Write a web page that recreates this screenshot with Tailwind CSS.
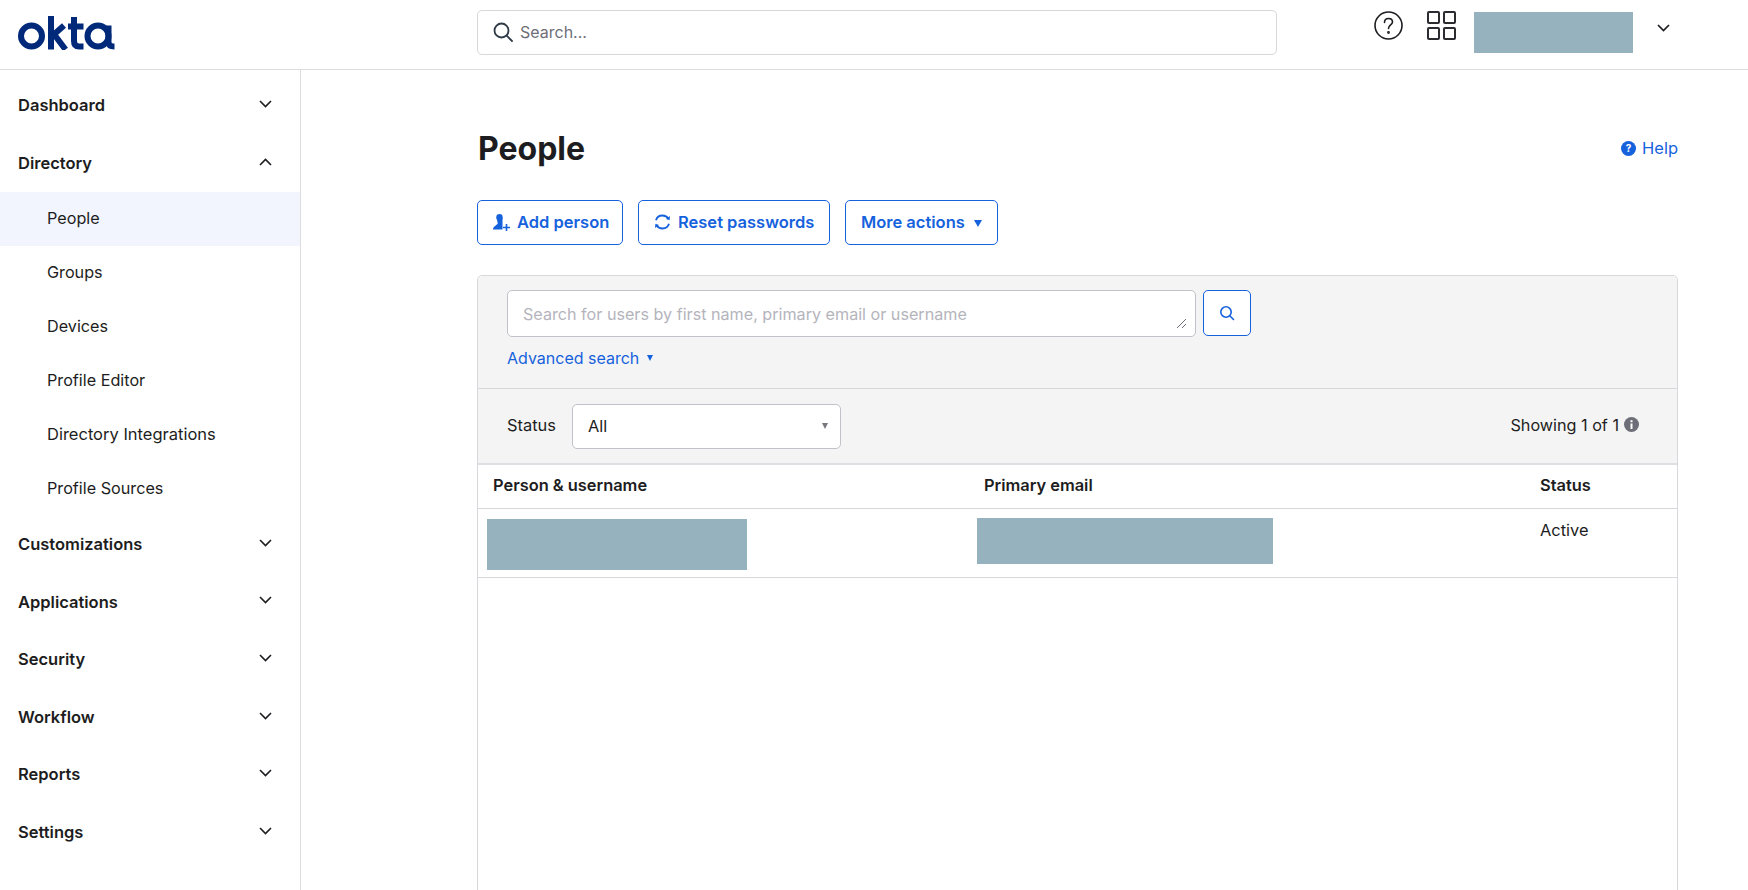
<!DOCTYPE html>
<html lang="en">
<head>
  <meta charset="UTF-8" />
  <title>People - Okta</title>
  <script src="https://cdn.jsdelivr.net/npm/@tailwindcss/browser@4"></script>
</head>
<body class="bg-white text-[#1d1d21] font-['Inter',sans-serif] h-[890px] overflow-hidden">

  <!-- Top bar -->
  <header class="h-[70px] border-b border-[#dcdcdc] flex items-start">
    <div class="w-[477px] pl-[18px] pt-[16px] shrink-0">
      <svg width="97" height="34" viewBox="0 0 97 34" fill="none" stroke="#00297a" stroke-width="6">
        <circle cx="13.5" cy="20" r="10.5" />
        <path d="M33 0V33.5M33 21L46 9.5M37 19.5L47.5 33.5" />
        <path d="M56 1V25Q56 30.5 61 30.5H65.5M50 10.5H65.5" />
        <circle cx="80" cy="20" r="10.5" />
        <path d="M90.5 9.5V26Q90.5 30.5 96.5 30.5" />
      </svg>
    </div>
    <div class="w-[800px] h-[45px] mt-[10px] pb-[2px] border border-[#d7d7dc] rounded-[5px] flex items-center pl-[14px] shrink-0">
      <svg width="22" height="22" viewBox="0 0 22 22" fill="none" stroke="#2e3a46" stroke-width="1.8" stroke-linecap="round">
        <circle cx="9.5" cy="9.5" r="7" />
        <path d="M14.7 14.7L20 20" />
      </svg>
      <span class="ml-[6px] text-[16px] text-[#6e6e78]">Search...</span>
    </div>
    <svg class="ml-[97px] mt-[11px] shrink-0" width="29" height="29" viewBox="0 0 29 29" fill="none" stroke="#1d1d21" stroke-width="1.6" stroke-linecap="round">
      <circle cx="14.5" cy="14.5" r="13.5" />
      <path d="M10.5 11.5C10.5 9 12.3 7.5 14.5 7.5C16.8 7.5 18.5 9 18.5 11C18.5 14 14.5 14 14.5 17.5" />
      <circle cx="14.5" cy="21.5" r="0.6" />
    </svg>
    <div class="ml-[24px] mt-[11px] grid grid-cols-2 gap-[3px] shrink-0">
      <div class="w-[13px] h-[13px] border-2 border-[#2b2b30] rounded-[2px]"></div>
      <div class="w-[13px] h-[13px] border-2 border-[#2b2b30] rounded-[2px]"></div>
      <div class="w-[13px] h-[13px] border-2 border-[#2b2b30] rounded-[2px]"></div>
      <div class="w-[13px] h-[13px] border-2 border-[#2b2b30] rounded-[2px]"></div>
    </div>
    <div class="ml-[18px] mt-[12px] w-[159px] h-[41px] bg-[#97b2bf] shrink-0"></div>
    <svg class="ml-[24px] mt-[24px] shrink-0" width="13" height="8" viewBox="0 0 13 8" fill="none" stroke="#1d1d21" stroke-width="1.7">
      <path d="M1 1L6.5 6.5L12 1" />
    </svg>
  </header>

  <div class="flex h-[820px]">
    <!-- Sidebar -->
    <nav class="w-[301px] shrink-0 border-r border-[#dcdce1] pt-[6px] text-[16.5px]">
      <div class="h-[58px] pl-[18px] pr-[28px] flex items-center justify-between font-semibold">
        <span>Dashboard</span>
        <svg class="mb-[2px]" width="13" height="8" viewBox="0 0 13 8" fill="none" stroke="#1d1d21" stroke-width="1.6"><path d="M1 1L6.5 6.5L12 1" /></svg>
      </div>
      <div class="h-[58px] pl-[18px] pr-[28px] flex items-center justify-between font-semibold">
        <span>Directory</span>
        <svg class="mb-[2px]" width="13" height="8" viewBox="0 0 13 8" fill="none" stroke="#1d1d21" stroke-width="1.6"><path d="M1 7L6.5 1.5L12 7" /></svg>
      </div>
      <div class="h-[54px] pl-[47px] pb-[1px] flex items-center bg-[#f2f5fe] text-[16.2px]">People</div>
      <div class="h-[54px] pl-[47px] pb-[1px] flex items-center text-[16.2px]">Groups</div>
      <div class="h-[54px] pl-[47px] pb-[1px] flex items-center text-[16.2px]">Devices</div>
      <div class="h-[54px] pl-[47px] pb-[1px] flex items-center text-[16.2px]">Profile Editor</div>
      <div class="h-[54px] pl-[47px] pb-[1px] flex items-center text-[16.5px]">Directory Integrations</div>
      <div class="h-[54px] pl-[47px] pb-[1px] flex items-center text-[16.2px]">Profile Sources</div>
      <div class="h-[57.6px] pl-[18px] pr-[28px] pb-[1px] flex items-center justify-between font-semibold">
        <span>Customizations</span>
        <svg class="mb-[3px]" width="13" height="8" viewBox="0 0 13 8" fill="none" stroke="#1d1d21" stroke-width="1.6"><path d="M1 1L6.5 6.5L12 1" /></svg>
      </div>
      <div class="h-[57.6px] pl-[18px] pr-[28px] pb-[1px] flex items-center justify-between font-semibold">
        <span>Applications</span>
        <svg class="mb-[3px]" width="13" height="8" viewBox="0 0 13 8" fill="none" stroke="#1d1d21" stroke-width="1.6"><path d="M1 1L6.5 6.5L12 1" /></svg>
      </div>
      <div class="h-[57.6px] pl-[18px] pr-[28px] pb-[1px] flex items-center justify-between font-semibold">
        <span>Security</span>
        <svg class="mb-[3px]" width="13" height="8" viewBox="0 0 13 8" fill="none" stroke="#1d1d21" stroke-width="1.6"><path d="M1 1L6.5 6.5L12 1" /></svg>
      </div>
      <div class="h-[57.6px] pl-[18px] pr-[28px] pb-[1px] flex items-center justify-between font-semibold">
        <span>Workflow</span>
        <svg class="mb-[3px]" width="13" height="8" viewBox="0 0 13 8" fill="none" stroke="#1d1d21" stroke-width="1.6"><path d="M1 1L6.5 6.5L12 1" /></svg>
      </div>
      <div class="h-[57.6px] pl-[18px] pr-[28px] pb-[1px] flex items-center justify-between font-semibold">
        <span>Reports</span>
        <svg class="mb-[3px]" width="13" height="8" viewBox="0 0 13 8" fill="none" stroke="#1d1d21" stroke-width="1.6"><path d="M1 1L6.5 6.5L12 1" /></svg>
      </div>
      <div class="h-[57.6px] pl-[18px] pr-[28px] pb-[1px] flex items-center justify-between font-semibold">
        <span>Settings</span>
        <svg class="mb-[3px]" width="13" height="8" viewBox="0 0 13 8" fill="none" stroke="#1d1d21" stroke-width="1.6"><path d="M1 1L6.5 6.5L12 1" /></svg>
      </div>
    </nav>

    <!-- Main content -->
    <main class="flex-1 pl-[176px] pr-[70px]">
      <div class="h-[130px] flex items-start justify-between pt-[54px]">
        <h1 class="text-[32px] leading-[48px] font-bold ml-[1px] mt-[1px]">People</h1>
        <a class="flex items-center text-[16.5px] text-[#1662dd] h-[48px]">
          <svg class="mr-[6px]" width="15" height="15" viewBox="0 0 15 15"><circle cx="7.5" cy="7.5" r="7.5" fill="#1662dd" /><text x="7.5" y="11" text-anchor="middle" font-size="10" font-weight="700" fill="#fff">?</text></svg>
          Help
        </a>
      </div>

      <div class="flex gap-[15px] text-[16.5px] font-semibold text-[#1662dd]">
        <button class="w-[146px] h-[45px] pb-[1px] border border-[#1662dd] rounded-[5px] flex items-center pl-[15px]">
          <svg class="mt-[1px]" width="18" height="17" viewBox="0 0 18 17" fill="#1662dd"><circle cx="6.5" cy="3.2" r="3.2" /><path d="M9.5 4V15.5H0C0 12.5 3.5 11.5 4.8 9.5L3.6 4Z" /><path d="M13.5 10V17M10 13.5H17" stroke="#1662dd" stroke-width="1.6" fill="none" /></svg>
          <span class="ml-[6px]">Add person</span>
        </button>
        <button class="w-[192px] h-[45px] pb-[1px] border border-[#1662dd] rounded-[5px] flex items-center pl-[15px]">
          <svg width="17" height="16" viewBox="0 0 17 16" fill="none" stroke="#1662dd" stroke-width="1.8"><path d="M2 6.2C2.8 3.4 5.4 1.5 8.5 1.5C11 1.5 13.2 2.8 14.4 4.8" /><path d="M15 9.8C14.2 12.6 11.6 14.5 8.5 14.5C6 14.5 3.8 13.2 2.6 11.2" /><path d="M16 2L15.6 6.2L12 5Z" fill="#1662dd" stroke="none" /><path d="M1 14L1.4 9.8L5 11Z" fill="#1662dd" stroke="none" /></svg>
          <span class="ml-[7px]">Reset passwords</span>
        </button>
        <button class="w-[153px] h-[45px] pb-[1px] border border-[#1662dd] rounded-[5px] flex items-center pl-[15px]">
          <span>More actions</span>
          <span class="ml-[9px] mt-[2px] w-0 h-0 border-x-[4px] border-x-transparent border-t-[7px] border-t-[#1662dd]"></span>
        </button>
      </div>

      <!-- People table panel -->
      <div class="mt-[30px] h-[616px] border border-[#d7d7dc] rounded-t-[5px]">
        <div class="h-[113px] bg-[#f4f4f4] border-b border-[#d7d7dc] pl-[29px] pt-[14px] rounded-t-[5px]">
          <div class="flex gap-[7px]">
            <div class="relative w-[689px] h-[47px] pt-[1px] bg-white border border-[#c1c1c8] rounded-[5px] flex items-center pl-[15px] text-[16.15px] text-[#b4b4bc]">
              Search for users by first name, primary email or username
              <svg class="absolute right-[8px] bottom-[7px]" width="11" height="11" viewBox="0 0 11 11" stroke="#6e6e78" stroke-width="1"><path d="M1 10L10 1M6 10L10 6" /></svg>
            </div>
            <button class="w-[48px] h-[46px] bg-white border border-[#1662dd] rounded-[5px] flex items-center justify-center">
              <svg width="16" height="16" viewBox="0 0 16 16" fill="none" stroke="#1662dd" stroke-width="1.6" stroke-linecap="round"><circle cx="7" cy="7" r="5.2" /><path d="M10.8 10.8L14.5 14.5" /></svg>
            </button>
          </div>
          <div class="mt-[11px] flex items-center text-[16px] leading-[20px] text-[#1662dd]">
            Advanced search
            <span class="ml-[8px] w-0 h-0 border-x-[3.5px] border-x-transparent border-t-[6px] border-t-[#1662dd]"></span>
          </div>
        </div>
        <div class="h-[76px] bg-[#f4f4f4] border-b-2 border-[#dfdfe3] pl-[29px] pr-[38px] flex items-center justify-between text-[16.4px]">
          <div class="flex items-center">
            <span class="mb-[2px]">Status</span>
            <div class="ml-[16px] w-[269px] h-[45px] bg-white border border-[#c1c1c8] rounded-[5px] flex items-center justify-between pl-[15px] pr-[12px]">
              <span>All</span>
              <span class="w-0 h-0 border-x-[3.5px] border-x-transparent border-t-[6px] border-t-[#77777f]"></span>
            </div>
          </div>
          <div class="flex items-center mb-[2px] text-[16.2px]">
            <span>Showing 1 of 1</span>
            <svg class="ml-[5px]" width="15" height="15" viewBox="0 0 15 15"><circle cx="7.5" cy="7.5" r="7.5" fill="#6e6e78" /><rect x="6.5" y="6.5" width="2" height="5.5" fill="#fff" /><rect x="6.5" y="3.2" width="2" height="2" fill="#fff" /></svg>
          </div>
        </div>
        <div class="h-[44px] pb-[2px] border-b border-[#d7d7dc] grid grid-cols-[506px_542px_1fr] items-center font-semibold text-[16.4px]">
          <span class="pl-[15px]">Person &amp; username</span>
          <span>Primary email</span>
          <span class="pl-[14px]">Status</span>
        </div>
        <div class="h-[69px] border-b border-[#d7d7dc] grid grid-cols-[506px_542px_1fr] items-start text-[16.4px]">
          <div class="pl-[9px] pt-[10px]"><div class="w-[260px] h-[51px] bg-[#97b2bf]"></div></div>
          <div class="-ml-[7px] pt-[9px]"><div class="w-[296px] h-[46px] bg-[#97b2bf]"></div></div>
          <span class="pl-[14px] pt-[9px]">Active</span>
        </div>
      </div>
    </main>
  </div>
</body>
</html>
